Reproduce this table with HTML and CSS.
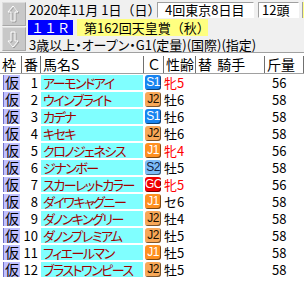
FILE: index.html
```html
<!DOCTYPE html>
<html lang="ja">
<head>
<meta charset="utf-8">
<link rel="stylesheet" href="styles.css">
</head>
<body>
<div class="top">
  <div class="arrows">
    <div class="btn">
      <svg width="22" height="22" viewBox="0 0 22 22"><path d="M11 4 L16 10 L13 10 L13 19 L9 19 L9 10 L6 10 Z" fill="none" stroke="#9a9a9a" stroke-width="1"/><path d="M10 3 L15 9 L12 9 L12 18 L8 18 L8 9 L5 9 Z" fill="none" stroke="#fff" stroke-width="1"/></svg>
    </div>
    <div class="btn">
      <svg width="22" height="22" viewBox="0 0 22 22"><path d="M11 20 L16 14 L13 14 L13 5 L9 5 L9 14 L6 14 Z" fill="none" stroke="#9a9a9a" stroke-width="1"/><path d="M10 19 L15 13 L12 13 L12 4 L8 4 L8 13 L5 13 Z" fill="none" stroke="#fff" stroke-width="1"/></svg>
    </div>
  </div>
  <div class="info">
    <div class="l1">
      <span class="date">2020年11月 1日（日）</span>
      <span class="box kai">4回東京8日目</span>
      <span class="box tou">12頭</span>
      <span class="yclip"></span>
    </div>
    <div class="l2">
      <span class="rno">１１Ｒ</span>
      <span class="title">第162回天皇賞（秋）</span>
    </div>
    <div class="l3">3歳以上・オープン・G1(定量)(国際)(指定)</div>
  </div>
</div>
<div class="table">
  <div class="hd">
    <div class="h">枠</div>
    <div class="h">番</div>
    <div class="h">馬名S</div>
    <div class="h hc">Ｃ</div>
    <div class="h">性齢</div>
    <div class="h hj">替 騎手</div>
    <div class="h">斤量</div>
  </div>
  <div class="row"><div class="waku"><span>仮</span></div><div class="no">1</div><div class="name">アーモンドアイ</div><div class="c"><span class="ic s1">S1</span></div><div class="sa f">牝5</div><div class="jk"></div><div class="kin">56</div></div>
  <div class="row"><div class="waku"><span>仮</span></div><div class="no">2</div><div class="name">ウインブライト</div><div class="c"><span class="ic j2">J2</span></div><div class="sa">牡6</div><div class="jk"></div><div class="kin">58</div></div>
  <div class="row"><div class="waku"><span>仮</span></div><div class="no">3</div><div class="name">カデナ</div><div class="c"><span class="ic s1">S1</span></div><div class="sa">牡6</div><div class="jk"></div><div class="kin">58</div></div>
  <div class="row"><div class="waku"><span>仮</span></div><div class="no">4</div><div class="name">キセキ</div><div class="c"><span class="ic j2">J2</span></div><div class="sa">牡6</div><div class="jk"></div><div class="kin">58</div></div>
  <div class="row"><div class="waku"><span>仮</span></div><div class="no">5</div><div class="name">クロノジェネシス</div><div class="c"><span class="ic j1">J1</span></div><div class="sa f">牝4</div><div class="jk"></div><div class="kin">56</div></div>
  <div class="row"><div class="waku"><span>仮</span></div><div class="no">6</div><div class="name">ジナンボー</div><div class="c"><span class="ic s2">S2</span></div><div class="sa">牡5</div><div class="jk"></div><div class="kin">58</div></div>
  <div class="row"><div class="waku"><span>仮</span></div><div class="no">7</div><div class="name">スカーレットカラー</div><div class="c"><span class="ic gc">GC</span></div><div class="sa f">牝5</div><div class="jk"></div><div class="kin">56</div></div>
  <div class="row"><div class="waku"><span>仮</span></div><div class="no">8</div><div class="name">ダイワキャグニー</div><div class="c"><span class="ic j1">J1</span></div><div class="sa">セ6</div><div class="jk"></div><div class="kin">58</div></div>
  <div class="row"><div class="waku"><span>仮</span></div><div class="no">9</div><div class="name">ダノンキングリー</div><div class="c"><span class="ic j2">J2</span></div><div class="sa">牡4</div><div class="jk"></div><div class="kin">58</div></div>
  <div class="row"><div class="waku"><span>仮</span></div><div class="no">10</div><div class="name">ダノンプレミアム</div><div class="c"><span class="ic j2">J2</span></div><div class="sa">牡5</div><div class="jk"></div><div class="kin">58</div></div>
  <div class="row"><div class="waku"><span>仮</span></div><div class="no">11</div><div class="name">フィエールマン</div><div class="c"><span class="ic j1">J1</span></div><div class="sa">牡5</div><div class="jk"></div><div class="kin">58</div></div>
  <div class="row"><div class="waku"><span>仮</span></div><div class="no">12</div><div class="name">ブラストワンピース</div><div class="c"><span class="ic j2">J2</span></div><div class="sa">牡5</div><div class="jk"></div><div class="kin">58</div></div>
</div>
</body>
</html>
```

FILE: styles.css
```css
* { box-sizing: border-box; margin: 0; padding: 0; }
html, body { width: 304px; height: 282px; overflow: hidden; }
body {
  background: #fff;
  font-family: "Noto Sans CJK JP", "Noto Sans", sans-serif;
  font-size: 13px;
  color: #000;
}

.top {
  background: #f0f0f0;
  height: 53px;
  display: flex;
  padding: 2px 0 0 2px;
  border-bottom: 1px solid #a0a0a0;
}
.arrows { display: flex; flex-direction: column; gap: 1px; width: 24px; }
.btn {
  width: 24px; height: 24px;
  background: #c8c8c8;
  border: 1px solid;
  border-color: #dedede #a8a8a8 #a8a8a8 #dedede;
}
.btn svg { display: block; }

.info { margin-left: 2px; display: flex; flex-direction: column; }
.l1 { display: flex; height: 16px; align-items: stretch; }
.date { width: 129px; padding-left: 1px; line-height: 15px; white-space: nowrap; }
.box {
  background: #fff;
  border: 1px solid;
  border-color: #a0a0a0 #fff #fff #a0a0a0;
  line-height: 14px;
  white-space: nowrap;
}
.kai { width: 97px; padding-left: 7px; }
.tou { width: 41px; margin-left: 4px; padding-left: 3px; }
.yclip { width: 10px; margin-left: 3px; background: #ffff80; border-left: 1px solid #a0a0a0; }

.l2 { display: flex; align-items: center; gap: 4px; height: 17px; margin-top: 1px; }
.rno {
  background: #0000ff; color: #fff;
  width: 45px; height: 15px; line-height: 15px;
  text-align: center;
}
.title {
  background: #ffff80;
  width: 131px; height: 17px; line-height: 17px;
  padding-left: 7px; white-space: nowrap;
}
.l3 { height: 14px; line-height: 14px; margin-top: 2px; padding-left: 1px; white-space: nowrap; font-feature-settings: "palt"; }

.table { padding-top: 1px; }
.hd, .row {
  display: grid;
  grid-template-columns: 22px 19px 103px 20px 32px 69px 39px;
}
.hd { height: 20px; padding-top: 2px; border-bottom: 1px solid #a0a0a0; }
.h {
  border-right: 1px solid #707070;
  font-size: 14px; line-height: 16px;
  padding-left: 2px;
  white-space: nowrap;
}
.hc { padding-left: 3px; }
.hj { word-spacing: 2px; }

.row { height: 17px; padding: 1px 0; }
.row > div { height: 15px; line-height: 15px; white-space: nowrap; }
.waku { padding-left: 3px; }
.waku span {
  display: block; width: 17px; height: 15px;
  background: #c0c0ff;
  border-left: 1px solid #7070c8;
  font-size: 14px; line-height: 15px;
  text-align: center;
}
.no { text-align: right; padding-right: 3px; }
.name {
  background: #80ffff;
  margin-right: 1px;
  color: #a00000;
  padding-left: 2px;
  letter-spacing: -1.5px;
  font-feature-settings: "palt";
}
.c { padding-left: 1px; }
.ic {
  display: block; width: 16px; height: 15px;
  border-radius: 3px;
  font-family: "Liberation Sans", sans-serif;
  font-size: 12px; line-height: 15px;
  text-align: center;
  letter-spacing: -0.5px;
  box-shadow: inset -1px -1px 0 rgba(0,0,0,0.5);
}
.s1 { background: #1884f0; color: #fff; }
.s2 { background: #7cbcf8; color: #102040; }
.j1 { background: #ff9020; color: #fff; }
.j2 { background: #f8a858; color: #201000; }
.gc { background: #f00000; color: #fff; }
.sa { padding-left: 0; }
.sa.f { color: #ff0000; }
.kin { padding-left: 7px; }
```
